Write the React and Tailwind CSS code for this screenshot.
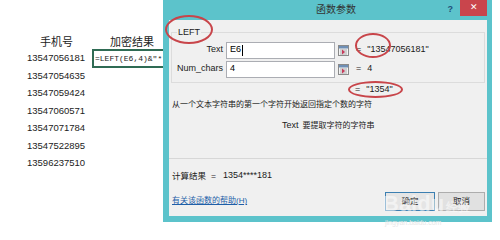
const PHONES = [
  '13547056181',
  '13547054635',
  '13547059424',
  '13547060571',
  '13547071784',
  '13547522895',
  '13596237510',
];

const font = "font-['Liberation_Sans','Noto_Sans_CJK_SC',sans-serif]";

function RefIcon() {
  return (
    <svg width="11" height="11" viewBox="0 0 11 11">
      <rect x="0.5" y="0.5" width="10" height="10" fill="#f4f4f4" stroke="#8a8a8a" />
      <rect x="1" y="1" width="9" height="2.5" fill="#6f8fb5" />
      <path d="M2 5h7M2 7h7M2 9h7" stroke="#9a9a9a" strokeWidth="0.8" />
      <path d="M4 4.5l3 2.5-3 2.5z" fill="#c83a5a" />
    </svg>
  );
}

function ArgRow({ label, value, result, hasCaret }) {
  return (
    <div className="flex h-[18px] items-center">
      <span className="w-[54px] pr-[3px] text-right text-[9px] text-[#1a1a1a]">{label}</span>
      <div className="flex h-[17px] w-[109px] items-center border border-[#abadb3] bg-white px-[3px] text-[9px] text-black">
        {value}
        {hasCaret && <span className="ml-[1px] h-[11px] w-px bg-black" />}
      </div>
      <div className="ml-[2px] flex h-[16px] w-[13px] items-center justify-center">
        <RefIcon />
      </div>
      <span className="ml-[6px] text-[9px] text-[#1a1a1a]">=</span>
      <span className="ml-[6px] text-[9px] text-[#1a1a1a]">{result}</span>
    </div>
  );
}

function Sheet() {
  return (
    <div className="w-[163px] shrink-0 overflow-hidden pt-[33px]">
      <div className="flex h-[16px] items-center font-['Noto_Sans_CJK_SC',sans-serif] text-[11px] text-[#222]">
        <span className="w-[110px] pl-[40px]">手机号</span>
        <span>加密结果</span>
      </div>
      <div className="flex">
        <div className="w-[92px] shrink-0 pl-[27px] font-['Liberation_Sans',sans-serif] text-[9.5px] leading-[17.5px] text-[#222]">
          {PHONES.map((p) => (
            <div key={p}>{p}</div>
          ))}
        </div>
        <div className="h-[19px] w-[71px] shrink-0 overflow-hidden border-2 border-r-0 border-[#2f6b54] pl-[1px] font-['Liberation_Mono','Noto_Sans_CJK_SC',monospace] text-[8px] leading-[15px] whitespace-nowrap text-[#222]">
          =LEFT(E6,4)&amp;"*"
        </div>
      </div>
    </div>
  );
}

function Dialog() {
  return (
    <div className={`flex h-[222px] w-[329px] shrink-0 flex-col bg-[#5cc3cb] pr-[5px] pb-[6px] pl-[6px] ${font}`}>
      <div className="flex h-[20px] items-start">
        <span className="mt-[4px] ml-[147px] whitespace-nowrap text-[10px] leading-[12px] text-[#333]">函数参数</span>
        <span className="flex-1" />
        <span className="mt-[3px] text-[9px] font-bold text-[#1f4f7a]">?</span>
        <div className="ml-[7px] flex h-[16px] w-[27px] items-center justify-center bg-[#c9454c] text-[9px] text-white">
          ✕
        </div>
      </div>
      <div className="flex flex-1 flex-col bg-[#f0f0f0] px-[2px] pb-[5px]">
        <div className="mt-[12px] h-[51px] border border-[#dcdcdc]">
          <div className="-mt-[6px] ml-[5px] w-fit bg-[#f0f0f0] px-[1px] text-[9px] leading-[11px] text-[#1a1a1a]">
            LEFT
          </div>
          <div className="mt-[3px] flex flex-col gap-[1px]">
            <ArgRow label="Text" value="E6" result={'"13547056181"'} hasCaret />
            <ArgRow label="Num_chars" value="4" result="4" />
          </div>
        </div>
        <div className="mt-[1px] flex h-[12px] items-center pl-[184px] text-[9px] text-[#1a1a1a]">
          <span>=</span>
          <span className="ml-[6px]">"1354"</span>
        </div>
        <div className="mt-[3px] h-[12px] pl-[1px] text-[8px] leading-[12px] text-[#1a1a1a]">
          从一个文本字符串的第一个字符开始返回指定个数的字符
        </div>
        <div className="mt-[8px] h-[12px] pl-[111px] text-[8px] leading-[12px] text-[#1a1a1a]">
          <span className="text-[9px]">Text</span>
          <span className="ml-[4px]">要提取字符的字符串</span>
        </div>
        <div className="mt-[27px] -mx-[2px] h-px bg-[#d7d7d7]" />
        <div className="mt-[11px] flex h-[12px] items-center pl-[1px] text-[8.5px] text-[#1a1a1a]">
          <span>计算结果</span>
          <span className="ml-[5px]">=</span>
          <span className="ml-[7px] text-[9px]">1354****181</span>
        </div>
        <div className="mt-auto flex items-end justify-between">
          <span className="mb-[4px] pl-[1px] text-[8px] text-[#1f5fa8] underline">有关该函数的帮助(H)</span>
          <div className="flex gap-[3px]">
            <div className="flex h-[19px] w-[50px] items-center justify-center border border-[#3c7fb1] bg-[#e5e5e5] text-[8.5px] text-[#1a1a1a]">
              确定
            </div>
            <div className="flex h-[19px] w-[47px] items-center justify-center border border-[#adadad] bg-[#e1e1e1] text-[8.5px] text-[#1a1a1a]">
              取消
            </div>
          </div>
        </div>
      </div>
    </div>
  );
}

export default function App() {
  return (
    <div className="relative flex h-[240px] w-[500px] overflow-hidden bg-white">
      <Sheet />
      <Dialog />
      {/* red highlight rings */}
      <div className="absolute top-[15px] left-[165px] h-[29px] w-[48px] rounded-[50%] border-2 border-[#c8454a]" />
      <div className="absolute top-[33px] left-[355px] h-[25px] w-[36px] rounded-[50%] border-2 border-[#c8454a]" />
      <div className="absolute top-[81px] left-[348px] h-[17px] w-[55px] rounded-[50%] border-2 border-[#c8454a]" />
      {/* watermark */}
      <div className="pointer-events-none absolute top-[193px] left-[383px] font-['Liberation_Sans',sans-serif] text-[22px] font-bold leading-[22px] text-white/50">
        Baidu<span className="ml-[2px] text-[12px]">经验</span>
      </div>
      <div className="pointer-events-none absolute top-[218px] left-[385px] font-['Liberation_Sans',sans-serif] text-[7px] text-[#e8e8e8]">
        jingyan.baidu.com
      </div>
    </div>
  );
}
